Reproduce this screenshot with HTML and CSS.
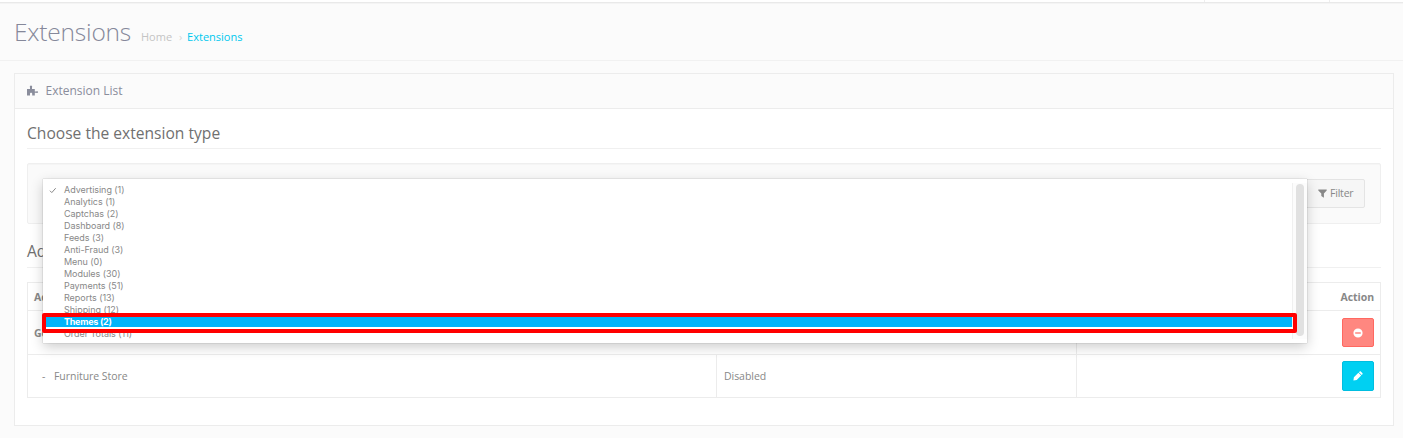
FILE: index.html
```html
<!DOCTYPE html>
<html lang="en">
<head>
<meta charset="utf-8">
<title>Extensions</title>
<link rel="stylesheet" href="styles.css">
</head>
<body>
<div class="topbar"><span></span><span></span></div>
<header class="page-header">
  <h1>Extensions</h1>
  <nav class="crumbs"><a class="home">Home</a><i>›</i><a class="current">Extensions</a></nav>
</header>
<main class="panel">
  <div class="panel-heading">
    <svg width="12" height="12" viewBox="0 0 12 12"><path fill="currentColor" d="M0 4h3V2.600C2.500 1.700 3 .6 4 .6s1.500 1.100 1 2V4h2.800v2.500h1.500c.6-.6 1.800-.3 1.800.6s-1.200 1.200-1.800.6H7.800V10.500H5.200V8.700c0-1.200-2.200-1.200-2.200 0v1.800H0z"/></svg>
    <span>Extension List</span>
  </div>
  <div class="panel-body">
    <h2>Choose the extension type</h2>
    <div class="well">
      <button class="filter"><svg width="9" height="9" viewBox="0 0 9 9"><path fill="currentColor" d="M.3.500h8.400v1L5.900 4.600V8.800L3.300 7.100V4.600L.3 1.500z"/></svg>Filter</button>
      <div class="menu">
        <ul class="options">
          <li class="checked"><svg width="8" height="7" viewBox="0 0 8 7"><path d="M.9 3.700l1.900 1.900L6.700 1.200" fill="none" stroke="currentColor"/></svg>Advertising (1)</li>
          <li>Analytics (1)</li>
          <li>Captchas (2)</li>
          <li>Dashboard (8)</li>
          <li>Feeds (3)</li>
          <li>Anti-Fraud (3)</li>
          <li>Menu (0)</li>
          <li>Modules (30)</li>
          <li>Payments (51)</li>
          <li>Reports (13)</li>
          <li>Shipping (12)</li>
          <li class="active">Themes (2)</li>
          <li>Order Totals (11)</li>
        </ul>
        <div class="track"><div class="thumb"></div></div>
        <div class="highlight"></div>
      </div>
    </div>
    <h2 class="second">Ad</h2>
    <table>
      <colgroup><col class="c1"><col class="c2"><col class="c3"></colgroup>
      <tr class="head"><th>Ad</th><th></th><th class="right">Action</th></tr>
      <tr class="group"><th colspan="2">Go</th><td class="right"><button class="btn danger"><svg width="10" height="10" viewBox="0 0 10 10"><path fill="#fff" fill-rule="evenodd" d="M5 .4a4.600 4.600 0 1 1 0 9.200A4.600 4.600 0 0 1 5 .4zM2.200 4.200v1.500h5.600V4.200z"/></svg></button></td></tr>
      <tr class="item"><td><span class="dash">-</span>Furniture Store</td><td>Disabled</td><td class="right"><button class="btn edit"><svg width="10" height="10" viewBox="0 0 10 10"><path fill="#fff" d="M.4 9.600l.5-3.300 4.500-4.500 2.800 2.800-4.500 4.500zM5.900 1.300l.6-.6c.5-.5 1-.5 1.500 0l1.300 1.300c.5.500.5 1 0 1.500l-.6.600z"/></svg></button></td></tr>
    </table>
  </div>
</main>
</body>
</html>
```
FILE: styles.css
```css
* { box-sizing: border-box; }
body { margin: 0; height: 438px; overflow: hidden; background: #fbfbfb; font: 11px/16px "Open Sans", sans-serif; color: #888; }
h1, h2, ul { margin: 0; padding: 0; font-weight: 400; }
svg { display: block; flex: none; }
.topbar { height: 4px; background: #fff; border-bottom: 1px solid #f4f4f4; box-shadow: inset 0 -1px #e9e9e9; display: flex; justify-content: flex-end; }
.topbar span { width: 125px; height: 2px; border-left: 1px solid #eee; }
.topbar span:last-child { width: 74px; }
.page-header { height: 57px; border-bottom: 1px solid #f1f1f1; padding: 11px 14px 0; display: flex; }
h1 { font-size: 24.5px; letter-spacing: -.2px; line-height: 34px; font-weight: 300; color: #85889a; width: 127px; white-space: nowrap; }
.crumbs { display: flex; padding-top: 14px; color: #c4c4c4; white-space: nowrap; }
.crumbs i { font-style: normal; width: 15px; padding-left: 7px; color: #d5d5d5; }
.crumbs .current { color: #00c8ee; }
.panel { margin: 12px 9px 0 14px; height: 353px; border: 1px solid #ececec; background: #fff; }
.panel-heading { height: 35px; padding-left: 12px; display: flex; align-items: center; gap: 6.5px; background: #fbfbfb; border-bottom: 1px solid #ececec; color: #8a8d9c; font-size: 12px; }
.panel-body { padding: 0 12px; }
h2 { height: 40px; padding-top: 13px; line-height: 22px; font-size: 15.6px; color: #707070; border-bottom: 1px solid #f0f0f0; }
.well { position: relative; height: 61px; margin-top: 14px; padding: 15px; background: #fafafa; border: 1px solid #efefef; border-radius: 2px; box-shadow: inset 0 1px 1px rgba(0,0,0,.025); display: flex; justify-content: flex-end; }
.filter { width: 62px; height: 29px; padding: 0 0 1px 14px; display: flex; align-items: center; gap: 3px; font: inherit; font-size: 10.5px; letter-spacing: -.2px; color: #888; background: #f6f6f6; border: 1px solid #e4e4e4; border-radius: 2px; }
.menu { position: absolute; z-index: 1; left: 15px; top: 15px; width: 1264px; height: 164px; background: #fff; display: flex; justify-content: space-between; box-shadow: 0 0 1px rgba(0,0,0,.35), 0 4px 12px rgba(0,0,0,.2); }
.options { list-style: none; width: 1249px; padding: 5px 0 0 3px; font: 9px/12px Inter, sans-serif; letter-spacing: -.04px; color: #888; }
.options li { height: 12px; padding-left: 18px; }
.options .checked { display: flex; padding-left: 3px; gap: 7px; align-items: center; }
.options .active { background: #00b4fa; color: #fff; font-weight: 700; letter-spacing: -.25px; }
.track { width: 15px; height: 156px; margin-top: 4px; padding: 1px 3px 0; border-left: 1px solid #f0f0f0; background: #fcfcfc; }
.thumb { width: 8px; height: 152px; border-radius: 4px; background: #e1e1e1; }
.highlight { position: absolute; left: -1px; top: 134px; width: 1255px; height: 20px; border: 4px solid #f00; border-radius: 2px; box-shadow: inset 0 -2px #fff; }
.second { height: 44px; padding-top: 16px; }
table { width: 1353px; margin-top: 14px; border-collapse: collapse; table-layout: fixed; font-size: 10.5px; letter-spacing: -.05px; }
.c1 { width: 689px; } .c2 { width: 360px; } .c3 { width: 304px; }
th, td { border: 1px solid #ececec; padding: 0 6px 0 7px; text-align: left; color: #888; }
th { padding-left: 6px; }
.head { height: 28px; } .group { height: 44px; } .item { height: 43px; }
.right { text-align: right; }
.dash { display: inline-block; width: 12px; margin-left: 7px; }
.btn { display: inline-flex; vertical-align: middle; align-items: center; justify-content: center; width: 32px; height: 30px; padding: 0; border-radius: 2px; }
.danger { height: 29px; background: #ff8780; border: 1px solid #ff6860; }
.edit { background: #00d0f2; border: 1px solid #00bee0; }
```
